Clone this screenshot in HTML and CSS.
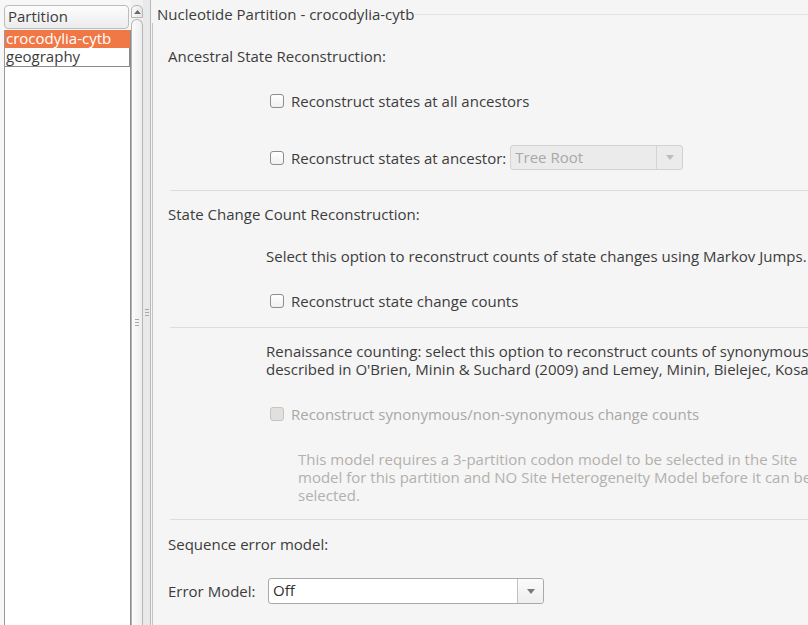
FILE: index.html
```html
<!DOCTYPE html>
<html>
<head>
<meta charset="utf-8">
<link rel="stylesheet" href="styles.css">
</head>
<body>
<div class="app">
  <div class="left">
    <div class="list-head">Partition</div>
    <div class="list">
      <div class="item selected">crocodylia-cytb</div>
      <div class="item focused">geography</div>
    </div>
  </div>
  <div class="scrollbar">
    <div class="sb-btn"><svg width="7" height="4" viewBox="0 0 7 4"><path d="M0 4 L3.5 0 L7 4 Z" fill="#6a6a6a"/></svg></div>
    <div class="sb-thumb"><span class="grip"></span></div>
  </div>
  <div class="splitter"><span class="grip"></span></div>
  <div class="right">
    <fieldset class="group">
      <legend>Nucleotide Partition - crocodylia-cytb</legend>
      <div class="hdr h1">Ancestral State Reconstruction:</div>
      <label class="cbrow r1"><span class="cb"></span>Reconstruct states at all ancestors</label>
      <div class="cbrow r2">
        <span class="cb"></span>Reconstruct states at ancestor:
        <span class="combo disabled"><span class="combo-text">Tree Root</span><span class="combo-btn"><svg width="8" height="5" viewBox="0 0 8 5"><path d="M0 0 L8 0 L4 5 Z" fill="#bdbdbd"/></svg></span></span>
      </div>
      <div class="sep s1"></div>
      <div class="hdr h2">State Change Count Reconstruction:</div>
      <div class="para p1">Select this option to reconstruct counts of state changes using Markov Jumps.</div>
      <label class="cbrow r3"><span class="cb"></span>Reconstruct state change counts</label>
      <div class="sep s2"></div>
      <div class="para p2">Renaissance counting: select this option to reconstruct counts of synonymous<br>described in O'Brien, Minin &amp; Suchard (2009) and Lemey, Minin, Bielejec, Kosako</div>
      <label class="cbrow r4 off"><span class="cb"></span>Reconstruct synonymous/non-synonymous change counts</label>
      <div class="note">This model requires a 3-partition codon model to be selected in the Site<br>model for this partition and NO Site Heterogeneity Model before it can be<br>selected.</div>
      <div class="sep s3"></div>
      <div class="hdr h3">Sequence error model:</div>
      <div class="errrow">
        <span class="errlabel">Error Model:</span>
        <span class="combo wide"><span class="combo-text">Off</span><span class="combo-btn"><svg width="8" height="5" viewBox="0 0 8 5"><path d="M0 0 L8 0 L4 5 Z" fill="#7a7a7a"/></svg></span></span>
      </div>
    </fieldset>
  </div>
</div>
</body>
</html>
```

FILE: styles.css
```css
* { box-sizing: border-box; }
html, body { margin: 0; padding: 0; }
body {
  width: 808px;
  height: 625px;
  overflow: hidden;
  background: #f5f5f5;
  font-family: "Open Sans", "DejaVu Sans", sans-serif;
  font-size: 15px;
  color: #3c3c3c;
}
.app {
  display: flex;
  height: 625px;
}
.left {
  width: 131px;
  flex: none;
  padding: 5px 0 0 4px;
  display: flex;
  flex-direction: column;
  background: #f7f7f7;
}
.list-head {
  width: 125px;
  height: 24px;
  border: 1px solid #bcbcbc;
  border-radius: 4px;
  background: linear-gradient(#fdfdfd, #ececec);
  padding-left: 3px;
  line-height: 21px;
}
.list {
  flex: 1;
  background: #fff;
  border-left: 1px solid #9a9a9a;
  border-right: 1px solid #8a8a8a;
  margin-top: 1px;
}
.item {
  height: 18px;
  line-height: 17px;
  padding-left: 1px;
  white-space: nowrap;
}
.item.selected {
  background: #f07746;
  color: #fff;
}
.item.focused {
  border-bottom: 1px solid #8a8a8a;
  border-right: 1px solid #8a8a8a;
  height: 19px;
}
.scrollbar {
  width: 12px;
  flex: none;
  padding-top: 5px;
  display: flex;
  flex-direction: column;
  background: #f1f1f1;
}
.sb-btn {
  height: 13px;
  border: 1px solid #b5b5b5;
  border-radius: 5px 5px 0 0;
  background: linear-gradient(90deg, #fafafa, #e8e8e8);
  display: flex;
  align-items: center;
  justify-content: center;
}
.sb-thumb {
  flex: 1;
  border: 1px solid #b5b5b5;
  border-bottom: none;
  border-radius: 6px 6px 0 0;
  margin-top: 1px;
  background: linear-gradient(90deg, #fbfbfb, #ededed);
  display: flex;
  align-items: center;
  justify-content: center;
}
.grip {
  display: block;
  width: 4px;
  height: 7px;
  border-top: 1px solid #a8a8a8;
  border-bottom: 1px solid #a8a8a8;
  position: relative;
}
.grip::after {
  content: "";
  position: absolute;
  left: 0;
  right: 0;
  top: 2px;
  border-top: 1px solid #a8a8a8;
}
.splitter {
  width: 8px;
  flex: none;
  background: #e9e9e9;
  border-right: 1px solid #b9b9b9;
  display: flex;
  align-items: center;
  justify-content: center;
}
.right {
  flex: 1;
  min-width: 0;
  overflow: hidden;
  padding: 0 0 0 1px;
  background: #f5f5f5;
}
.group {
  margin: 5px 0 0 0;
  padding: 0 0 0 15px;
  border: none;
  border-top: 1px solid #e2e2e2;
  border-left: 1px solid #c4c4c4;
  min-width: 0;
  height: 640px;
}
.group legend {
  padding: 0 1px 0 5px;
  margin-left: -16px;
  line-height: 18px;
  white-space: nowrap;
  background: transparent;
}
.hdr, .cbrow, .para, .note, .errrow {
  white-space: nowrap;
  line-height: 18px;
}
.h1 { margin-top: 24px; }
.cbrow {
  display: flex;
  align-items: center;
  margin-left: 102px;
}
.cb {
  width: 14px;
  height: 14px;
  border: 1px solid #8e8e8e;
  border-radius: 3px;
  background: linear-gradient(#ffffff, #f0f0f0);
  margin-right: 7px;
  flex: none;
}
.r1 { margin-top: 27px; }
.r2 { margin-top: 35px; height: 25px; }
.combo {
  display: inline-flex;
  height: 25px;
  border: 1px solid #c8c8c8;
  border-radius: 3px;
  margin-left: 4px;
  background: #fff;
}
.combo.disabled {
  width: 173px;
  background: #ebebeb;
  border-color: #d2d2d2;
  color: #a8a8a8;
}
.combo-text {
  flex: 1;
  padding-left: 4px;
  line-height: 23px;
}
.combo-btn {
  width: 26px;
  border-left: 1px solid #d4d4d4;
  display: flex;
  align-items: center;
  justify-content: center;
}
.combo.wide {
  width: 276px;
  height: 26px;
  border-color: #aaaaaa;
  margin-left: 0;
  color: #303030;
}
.combo.wide .combo-btn { border-left-color: #c0c0c0; background: linear-gradient(#fbfbfb, #eeeeee); border-radius: 0 3px 3px 0; }
.sep {
  height: 1px;
  background: #dcdcdc;
  margin-left: 2px;
}
.s1 { margin-top: 20px; }
.h2 { margin-top: 14px; }
.p1 { margin-left: 98px; margin-top: 24px; }
.r3 { margin-top: 27px; }
.s2 { margin-top: 17px; }
.p2 { margin-left: 98px; margin-top: 14px; }
.r4 { margin-top: 27px; }
.off { color: #aaa7a4; }
.off .cb { background: #e2e0de; border-color: #c6c3c0; }
.note {
  margin-left: 130px;
  margin-top: 27px;
  color: #b3b0ad;
}
.s3 { margin-top: 15px; }
.h3 { margin-top: 15px; }
.errrow {
  display: flex;
  align-items: center;
  margin-top: 25px;
}
.errlabel { width: 100px; flex: none; }
```
